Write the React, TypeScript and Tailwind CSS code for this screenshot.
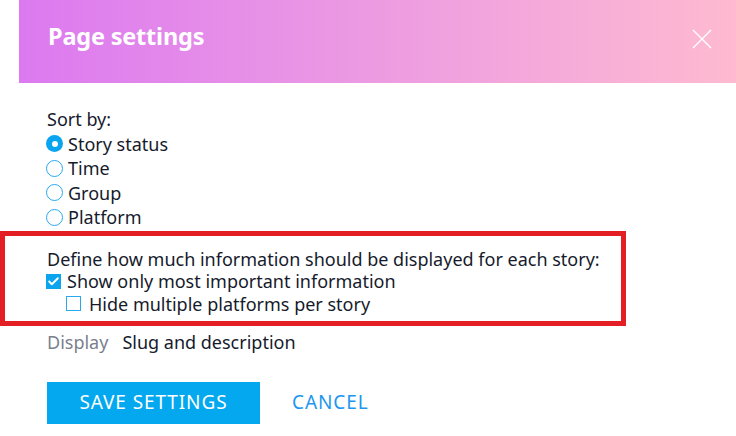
import { Check } from 'lucide-react'

const sortOptions = ['Story status', 'Time', 'Group', 'Platform']

const Radio = ({ checked }: { checked?: boolean }) => (
  <span
    className={
      checked
        ? 'w-[17px] h-[17px] rounded-full bg-[#0aa4ef] flex items-center justify-center shrink-0'
        : 'w-[17px] h-[17px] rounded-full border-[1.5px] border-[#29a8ee] bg-white shrink-0'
    }
  >
    {checked && <span className="w-[6px] h-[6px] rounded-full bg-white" />}
  </span>
)

const Box = ({ checked }: { checked?: boolean }) => (
  <span
    className={
      checked
        ? 'w-[15px] h-[15px] bg-[#0aa4ef] flex items-center justify-center shrink-0'
        : 'w-[15px] h-[15px] border-[1.5px] border-[#29a8ee] bg-white shrink-0'
    }
  >
    {checked && <Check className="w-[13px] h-[13px] text-white" strokeWidth={3.5} />}
  </span>
)

const App = () => {
  return (
    <div
      className="w-[736px] h-[436px] bg-white overflow-hidden text-[#161b2c]"
      style={{ fontFamily: '"Noto Sans", "Open Sans", sans-serif' }}
    >
      <div className="ml-[19px] h-[83px] bg-gradient-to-r from-[#dc79f0] to-[#febad0] flex items-center justify-between pl-[29px] pr-[24px] pb-[9px]">
        <h1 className="text-white text-[23.5px] font-bold tracking-[-0.2px]">Page settings</h1>
        <svg width="20" height="20" viewBox="0 0 20 20" className="text-white mt-[3px]">
          <path d="M1 1 L19 19 M19 1 L1 19" stroke="currentColor" strokeWidth="1.4" fill="none" />
        </svg>
      </div>

      <div className="pt-[24px] text-[18px] leading-[24.5px]">
        <div className="pl-[46px]">
          <div className="pl-[1px]">Sort by:</div>
          {sortOptions.map((opt, i) => (
            <label key={opt} className="flex items-center gap-[5px]">
              <Radio checked={i === 0} />
              <span>{opt}</span>
            </label>
          ))}
        </div>

        <div className="mt-[1px] w-[626px] border-[5px] border-[#e41e25] pl-[42px] pt-[12px] pb-[6px] leading-[22.5px]">
          <div>Define how much information should be displayed for each story:</div>
          <label className="flex items-center gap-[6px] -ml-[1px]">
            <Box checked />
            <span>Show only most important information</span>
          </label>
          <label className="flex items-center gap-[8px] pl-[19px]">
            <Box />
            <span>Hide multiple platforms per story</span>
          </label>
        </div>

        <div className="pl-[47px] mt-[4px] flex gap-[14px]">
          <span className="text-[#7a7f8e]">Display</span>
          <span>Slug and description</span>
        </div>

        <div className="pl-[47px] mt-[27px] flex items-center gap-[32px]">
          <button className="w-[213px] h-[42px] bg-[#03a8ef] text-white text-[19px] tracking-[0.9px]">
            SAVE SETTINGS
          </button>
          <button className="text-[#1d96f0] text-[19px] tracking-[0.9px]">CANCEL</button>
        </div>
      </div>
    </div>
  )
}

export default App
